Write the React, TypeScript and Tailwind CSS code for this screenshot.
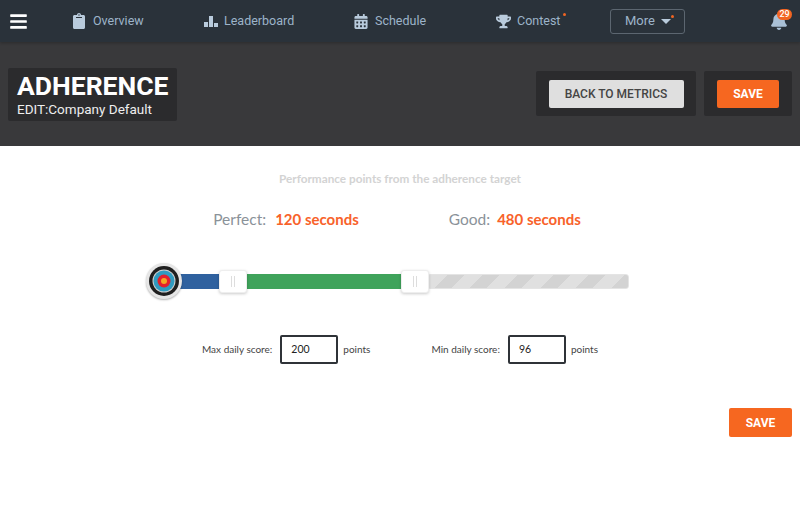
import { FaBars, FaBell, FaCalendarAlt, FaClipboard, FaTrophy } from "react-icons/fa";

function BarsIcon() {
  return (
    <svg width="14" height="11" viewBox="0 0 14 11" className="fill-[#b9cbdc]">
      <rect x="0" y="6" width="4" height="5" />
      <rect x="5" y="0" width="4" height="11" />
      <rect x="10" y="7" width="4" height="4" />
    </svg>
  );
}

function NavItem({ icon, label, dot, className }: { icon: React.ReactNode; label: string; dot?: boolean; className: string }) {
  return (
    <div className={`flex items-center ${className}`}>
      {icon}
      <span className="relative text-[12.5px] text-[#9db4c9]">
        {label}
        {dot && <span className="absolute -right-[6px] top-[1px] size-[3.5px] rounded-full bg-[#f26522]" />}
      </span>
    </div>
  );
}

function Target() {
  return (
    <div className="z-10 size-[36px] shrink-0 rounded-full bg-[#e6e6e6] p-[3px] shadow-[0_1px_2px_rgba(0,0,0,0.3)]">
      <svg viewBox="0 0 30 30" className="size-[30px]">
        <circle cx="15" cy="15" r="15" fill="#1f1f1f" />
        <circle cx="15" cy="15" r="11.5" fill="#cfcfcf" />
        <circle cx="15" cy="15" r="10.5" fill="#2f9bc0" />
        <circle cx="15" cy="15" r="6.5" fill="#e3202c" />
        <circle cx="15" cy="15" r="3" fill="#f5a623" />
      </svg>
    </div>
  );
}

function Handle() {
  return (
    <div className="z-10 flex h-[23px] w-[28px] shrink-0 items-center justify-center gap-[2px] rounded-[3px] border border-[#eeeeee] bg-white shadow-[0_1px_3px_rgba(0,0,0,0.2)]">
      <span className="h-[11px] w-px bg-[#dddddd]" />
      <span className="h-[11px] w-px bg-[#dddddd]" />
    </div>
  );
}

function ScoreField({ label, value }: { label: string; value: string }) {
  return (
    <div className="flex items-center text-[10px] text-[#444444]">
      <span>{label}</span>
      <div className="ml-[8px] mr-[5px] flex h-[29px] w-[58px] items-center rounded-[2px] border-2 border-[#2f3338] pl-[9px] text-[10.5px] text-[#222222]">
        {value}
      </div>
      <span>points</span>
    </div>
  );
}

export default function App() {
  return (
    <div className="flex h-[506px] w-[800px] flex-col overflow-hidden bg-white font-['Lato',sans-serif]">
      <nav className="relative z-10 flex h-[42px] shrink-0 items-center bg-[#2a323a] font-['Roboto',sans-serif] shadow-[0_1px_3px_rgba(0,0,0,0.25)]">
        <FaBars className="ml-[9px] size-[19px] text-white" />
        <NavItem className="ml-[45px] w-[131px]" icon={<FaClipboard className="mr-[8px] h-[16px] w-[12px] text-[#b9cbdc]" />} label="Overview" />
        <NavItem className="w-[150px]" icon={<span className="mr-[6px]"><BarsIcon /></span>} label="Leaderboard" />
        <NavItem className="w-[142px]" icon={<FaCalendarAlt className="mr-[7px] h-[15px] w-[14px] text-[#b9cbdc]" />} label="Schedule" />
        <NavItem className="w-[114px]" icon={<FaTrophy className="mr-[6px] size-[15px] text-[#b9cbdc]" />} label="Contest" dot />
        <div className="relative flex h-[25px] w-[75px] items-center rounded-[3px] border border-[#5c6670] pl-[14px] text-[13px] text-[#9db4c9]">
          More
          <span className="ml-[6px] mt-[1px] size-0 border-x-[5px] border-t-[5px] border-x-transparent border-t-[#b9cbdc]" />
          <span className="absolute right-[10px] top-[5px] size-[3.5px] rounded-full bg-[#f26522]" />
        </div>
        <div className="relative ml-[85px]">
          <FaBell className="size-[18px] text-[#a9c0d6]" />
          <span className="absolute -right-[4px] -top-[3px] flex h-[11px] min-w-[15px] items-center justify-center rounded-full bg-[#f26522] text-[9px] font-medium leading-none text-white">
            29
          </span>
        </div>
      </nav>

      <header className="flex h-[104px] shrink-0 items-start justify-between bg-[#39393b] px-[8px] pt-[26px]">
        <div className="h-[53px] w-[169px] rounded-[2px] bg-[#2b2b2d] pl-[9px] pt-[3px] font-['Roboto',sans-serif] text-white">
          <div className="text-[26.5px] font-bold leading-[30px]">ADHERENCE</div>
          <div className="text-[13.5px] leading-[16px] text-[#eeeeee]">EDIT:Company Default</div>
        </div>
        <div className="flex gap-[8px] pt-[3px]">
          <div className="flex h-[45px] w-[160px] items-center justify-center rounded-[2px] bg-[#2b2b2d]">
            <button className="h-[28px] w-[135px] rounded-[2px] bg-[#dfdfdf] font-['Roboto',sans-serif] text-[12px] font-medium text-[#444444]">
              BACK TO METRICS
            </button>
          </div>
          <div className="flex h-[45px] w-[88px] items-center justify-center rounded-[2px] bg-[#2b2b2d]">
            <button className="h-[28px] w-[62px] rounded-[2px] bg-[#f66720] font-['Roboto',sans-serif] text-[12px] font-bold text-white">
              SAVE
            </button>
          </div>
        </div>
      </header>

      <main className="relative flex flex-1 flex-col items-center">
        <p className="mt-[25px] text-[11.75px] font-bold leading-[15px] text-[#d3d3d3]">Performance points from the adherence target</p>

        <div className="mt-[23px] flex h-[20px] -translate-x-[3px] items-center text-[15.5px] leading-[20px]">
          <span className="text-[#8a9299]">Perfect:</span>
          <span className="ml-[9px] text-[15px] font-bold text-[#f8622a]">120 seconds</span>
          <span className="ml-[90px] text-[#8a9299]">Good:</span>
          <span className="ml-[7px] text-[15px] font-bold text-[#f8622a]">480 seconds</span>
        </div>

        <div className="ml-[146px] mt-[34px] flex h-[36px] w-[483px] items-center self-start">
          <Target />
          <div className="-ml-[2px] h-[15px] w-[39px] bg-[#2f619f]" />
          <Handle />
          <div className="h-[15px] w-[154px] bg-[#3fa35b]" />
          <Handle />
          <div className="h-[15px] w-[200px] rounded-r-[3px] border border-[#e4e4e4] bg-[repeating-linear-gradient(-45deg,#d3d3d3_0px,#d3d3d3_12px,#e0e0e0_12px,#e0e0e0_25px)]" />
        </div>

        <div className="mt-[36px] flex gap-[61px]">
          <ScoreField label="Max daily score:" value="200" />
          <ScoreField label="Min daily score:" value="96" />
        </div>

        <button className="absolute right-[8px] top-[262px] h-[29px] w-[63px] rounded-[2px] bg-[#f66720] font-['Roboto',sans-serif] text-[12px] font-bold text-white">
          SAVE
        </button>
      </main>
    </div>
  );
}
